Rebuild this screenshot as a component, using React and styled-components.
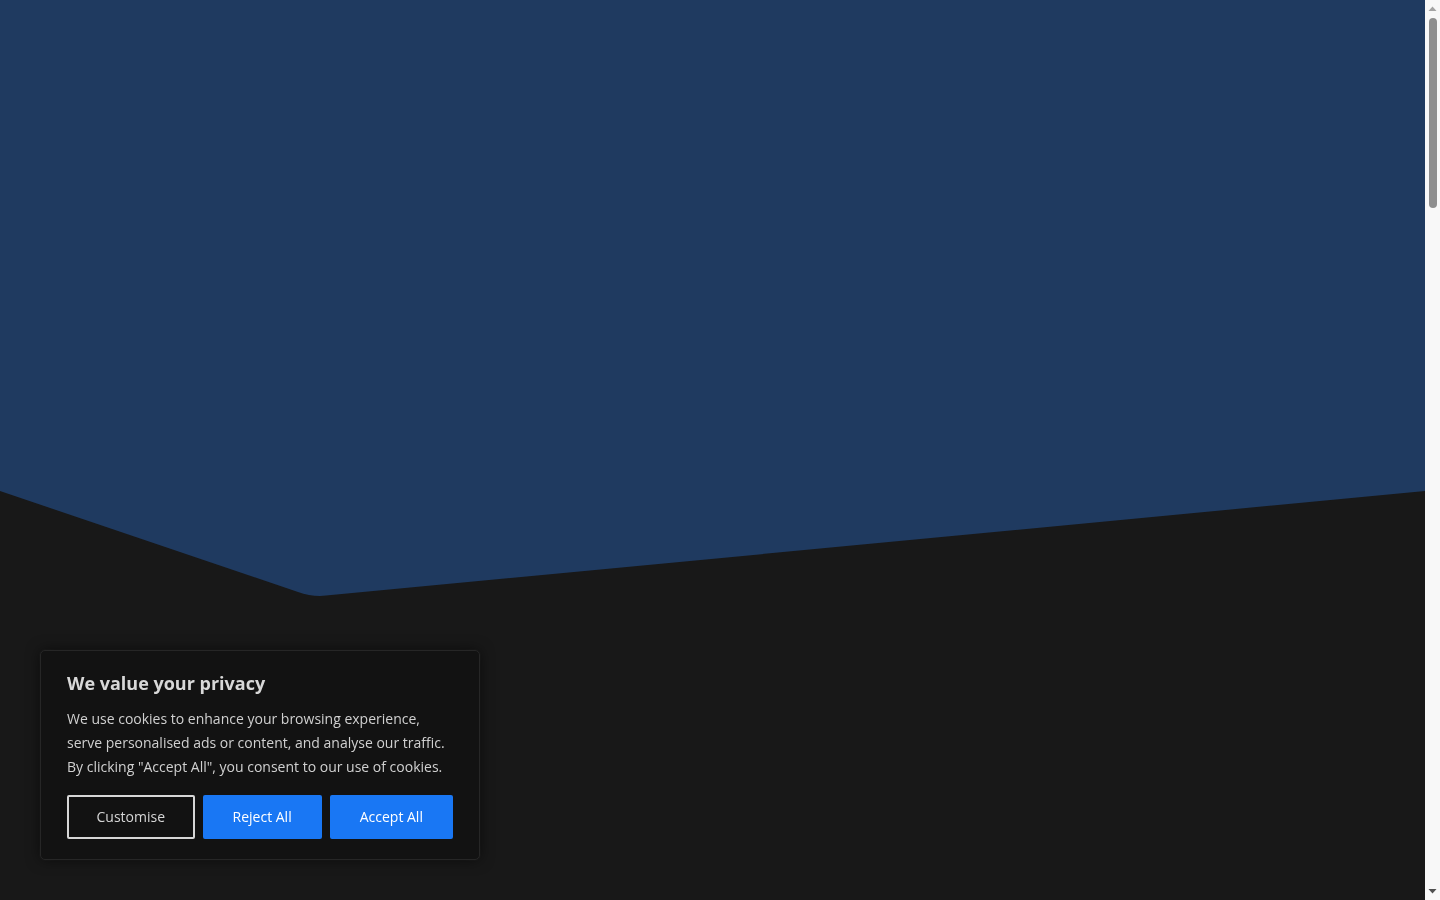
import React from 'react';
import styled, { createGlobalStyle } from 'styled-components';

const GlobalStyle = createGlobalStyle`
  html, body {
    margin: 0;
    padding: 0;
    height: 100%;
    overflow: hidden;
    background: #181818;
  }
  body {
    font-family: "Open Sans", "Liberation Sans", sans-serif;
  }
`;

const Frame = styled.div`
  display: flex;
  height: 100vh;
`;

const Main = styled.main`
  flex: 1;
  min-width: 0;
  background: #181818;
`;

const Hero = styled.section`
  height: 600px;
  line-height: 0;
`;

const HeroShape = styled.svg`
  display: block;
  width: 100%;
  height: 600px;
`;

const ScrollRail = styled.div`
  width: 15px;
  flex: 0 0 15px;
  display: flex;
  flex-direction: column;
  align-items: center;
  background: #f8f8f8;
`;

const Arrow = styled.svg`
  display: block;
  width: 15px;
  height: 17px;
  flex: 0 0 17px;
`;

const Track = styled.div`
  flex: 1;
  width: 100%;
  display: flex;
  justify-content: center;
  padding-top: 1px;
`;

const Thumb = styled.div`
  width: 8px;
  height: 190px;
  border-radius: 4px;
  background: #8e8e8e;
`;

const Banner = styled.div`
  position: fixed;
  left: 40px;
  bottom: 40px;
  width: 440px;
  box-sizing: border-box;
  padding: 20px 26px 20px 26px;
  background: #121212;
  border: 1px solid #262626;
  border-radius: 5px;
  box-shadow: 0 0 14px rgba(0, 0, 0, 0.55), 0 0 3px rgba(255, 255, 255, 0.05);
  color: #d4d4d4;
`;

const Title = styled.h2`
  margin: 0 0 12px;
  font-size: 18px;
  line-height: 24px;
  font-weight: 700;
  color: #d8d8d8;
`;

const Text = styled.p`
  margin: 0 0 16px;
  font-size: 14px;
  line-height: 24px;
  color: #d0d0d0;
`;

const Actions = styled.div`
  display: flex;
  gap: 8px;
`;

const Button = styled.button`
  height: 44px;
  padding: 0 ${(p) => (p.$outline ? '27.5px' : '28px')} 1px;
  border: 2px solid ${(p) => (p.$outline ? '#d6d6d6' : '#1977f4')};
  border-radius: 2px;
  background: ${(p) => (p.$outline ? 'transparent' : '#1977f4')};
  color: ${(p) => (p.$outline ? '#d6d6d6' : '#ffffff')};
  font-family: "Open Sans", "Liberation Sans", sans-serif;
  font-size: 14px;
  font-weight: 500;
  cursor: pointer;
`;

export default function App() {
  return (
    <>
      <GlobalStyle />
      <Frame>
        <Main>
          <Hero>
            <HeroShape viewBox="0 0 1425 600" preserveAspectRatio="none">
              <path
                d="M0,0 H1425 V491 L326,595.6 Q312,597 298,592 L0,491 Z"
                fill="#1f3a60"
              />
            </HeroShape>
          </Hero>
        </Main>
        <ScrollRail>
          <Arrow viewBox="0 0 15 17">
            <path d="M3.5 11 L7.5 6.5 L11.5 11 Z" fill="#a3a3a3" />
          </Arrow>
          <Track>
            <Thumb />
          </Track>
          <Arrow viewBox="0 0 15 17">
            <path d="M3.5 6 L7.5 10.5 L11.5 6 Z" fill="#505050" />
          </Arrow>
        </ScrollRail>
      </Frame>
      <Banner>
        <Title>We value your privacy</Title>
        <Text>
          We use cookies to enhance your browsing experience, serve personalised ads or content, and analyse our
          traffic. By clicking "Accept All", you consent to our use of cookies.
        </Text>
        <Actions>
          <Button $outline>Customise</Button>
          <Button>Reject All</Button>
          <Button>Accept All</Button>
        </Actions>
      </Banner>
    </>
  );
}
